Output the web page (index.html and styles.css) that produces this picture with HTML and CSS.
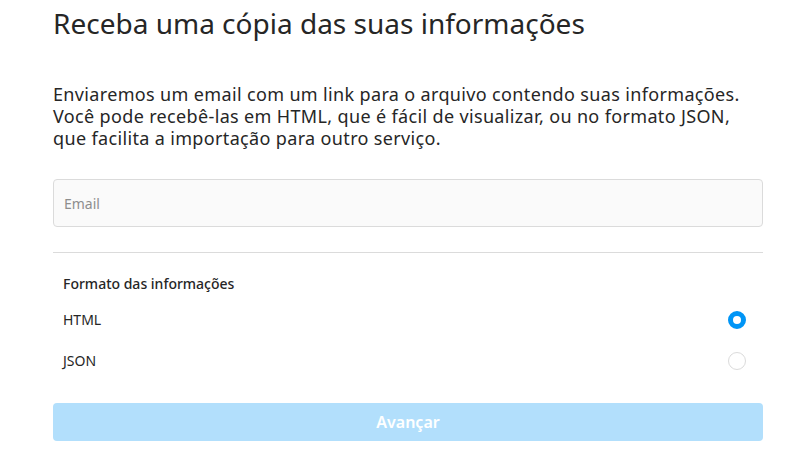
FILE: index.html
```html
<!DOCTYPE html>
<html lang="pt-BR">
<head>
    <meta charset="UTF-8">
    <meta name="viewport" content="width=device-width, initial-scale=1.0">
    <title>Receba uma cópia das suas informações</title>
    <link rel="stylesheet" href="styles.css">
</head>
<body>
    <div class="page">
        <h1 class="title">Receba uma cópia das suas informações</h1>
        <p class="intro">Enviaremos um email com um link para o arquivo contendo suas informações. Você pode recebê-las em HTML, que é fácil de visualizar, ou no formato JSON, que facilita a importação para outro serviço.</p>

        <form class="download-form">
            <input type="email" class="email-input" placeholder="Email">
            <hr class="divider">
            <div class="format-label">Formato das informações</div>
            <label class="format-option">
                <span>HTML</span>
                <input type="radio" name="format" value="html" checked>
                <span class="radio"></span>
            </label>
            <label class="format-option">
                <span>JSON</span>
                <input type="radio" name="format" value="json">
                <span class="radio"></span>
            </label>
            <button type="button" class="next-button" disabled>Avançar</button>
        </form>
    </div>
</body>
</html>
```

FILE: styles.css
```css
body {
    margin: 0;
    background-color: #fff;
    color: #262626;
    font-family: "Noto Sans", "Open Sans", Arial, sans-serif;
}

.page {
    width: 710px;
    padding-left: 53px;
}

.title {
    font-size: 28px;
    font-weight: 400;
    line-height: 34px;
    margin: 6px 0 0 0;
}

.intro {
    font-size: 18px;
    line-height: 22px;
    letter-spacing: 0.35px;
    margin: 43px 0 0 0;
}

.download-form {
    margin-top: 30px;
}

.email-input {
    display: block;
    box-sizing: border-box;
    width: 100%;
    height: 48px;
    padding: 0 10px;
    background-color: #fafafa;
    border: 1px solid #dbdbdb;
    border-radius: 4px;
    font-family: inherit;
    font-size: 14px;
    color: #262626;
}

.email-input::placeholder {
    color: #8e8e8e;
}

.divider {
    border: none;
    border-top: 1px solid #dbdbdb;
    margin: 25px 0 0 0;
}

.format-label {
    font-size: 14px;
    font-weight: 500;
    line-height: 18px;
    padding: 22px 10px 0 10px;
}

.format-option {
    display: flex;
    justify-content: space-between;
    align-items: center;
    font-size: 14px;
    line-height: 18px;
    padding: 0 17px 0 10px;
    height: 41px;
    cursor: pointer;
}

.format-option:first-of-type {
    margin-top: 6px;
}

.format-option input {
    display: none;
}

.radio {
    box-sizing: border-box;
    width: 18px;
    height: 18px;
    border-radius: 50%;
    border: 1px solid #dbdbdb;
}

.format-option input:checked + .radio {
    border: 5px solid #0095f6;
}

.next-button {
    display: block;
    width: 100%;
    height: 38px;
    margin-top: 22px;
    border: none;
    border-radius: 4px;
    background-color: #b2dffc;
    color: #fff;
    font-family: inherit;
    font-size: 16px;
    font-weight: 600;
}
```
